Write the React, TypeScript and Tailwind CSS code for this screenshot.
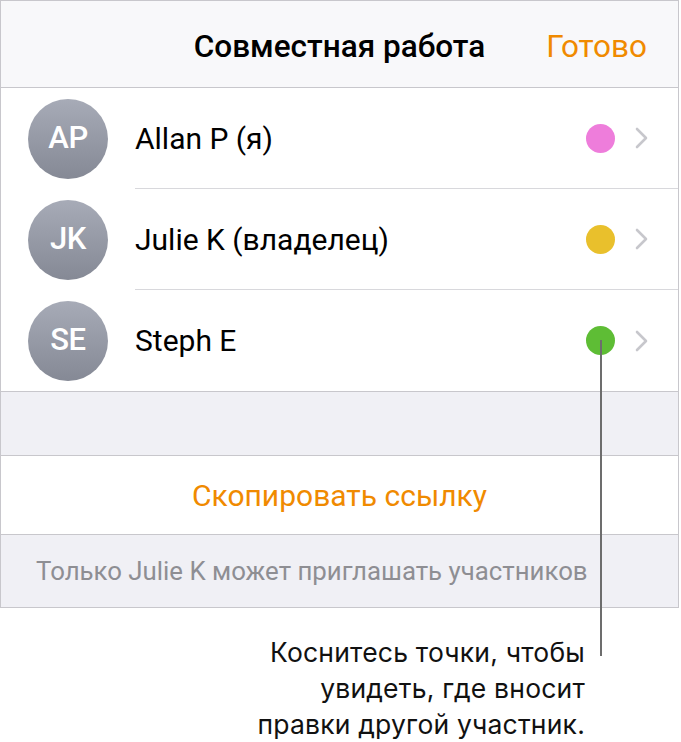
import React from 'react';

const people = [
  { initials: 'AP', name: 'Allan P (я)', color: 'bg-[#ee7ddb]' },
  { initials: 'JK', name: 'Julie K (владелец)', color: 'bg-[#e9c02c]' },
  { initials: 'SE', name: 'Steph E', color: 'bg-[#5ebd35]' },
];

function Chevron() {
  return (
    <svg width="13" height="22" viewBox="0 0 13 22" fill="none">
      <path d="M2 2l9 9-9 9" stroke="#c7c7cc" strokeWidth="2.6" strokeLinecap="round" strokeLinejoin="round" />
    </svg>
  );
}

export default function App() {
  return (
    <div className="w-[681px] h-[742px] bg-white font-['Roboto','Liberation_Sans',sans-serif] relative overflow-hidden">
      <div className="w-[679px] border border-[#c8c7cc] bg-white">
        {/* header */}
        <div className="h-[87px] bg-[#f8f8fa] border-b border-[#c8c7cc] grid grid-cols-[1fr_auto_1fr] items-center pt-[6px]">
          <div />
          <div className="text-[31.5px] font-medium text-black tracking-[0px]">Совместная работа</div>
          <div className="text-right pr-[31px] text-[31.5px] text-[#f08a00]">Готово</div>
        </div>

        {/* participants */}
        <div className="border-b border-[#c8c7cc]">
          {people.map((p, i) => (
            <div key={p.initials} className="flex items-center h-[101px] pl-[27px]">
              <div className="w-[80px] h-[80px] shrink-0 rounded-full bg-gradient-to-b from-[#a7abb7] to-[#858995] flex items-center justify-center text-white text-[31px] font-medium tracking-[-0.5px]">
                {p.initials}
              </div>
              <div className={`ml-[27px] flex-1 h-full flex items-center pr-[30px] ${i < people.length - 1 ? 'border-b border-[#d8d8dc]' : ''}`}>
                <div className="flex-1 text-[30px] text-black">{p.name}</div>
                <div className={`w-[29px] h-[29px] rounded-full ${p.color}`} />
                <div className="ml-[20px] flex items-center"><Chevron /></div>
              </div>
            </div>
          ))}
        </div>

        <div className="h-[64px] bg-[#f0f0f5] border-b border-[#c8c7cc]" />

        <div className="h-[79px] flex items-center justify-center border-b border-[#c8c7cc] text-[30px] text-[#f08a00]">
          Скопировать ссылку
        </div>

        <div className="h-[72px] bg-[#f0f0f5] flex items-center pl-[35px] text-[25.8px] text-[#8e8e93]">
          Только Julie K может приглашать участников
        </div>
      </div>

      {/* callout */}
      <div className="absolute left-[600px] top-[340px] w-[2px] h-[316px] bg-[#6d6d6d]" />
      <div className="w-[585px] text-right pt-[26px] text-[26.5px] leading-[36px] text-[#111] font-['Inter','Roboto',sans-serif] tracking-[0.2px]">
        Коснитесь точки, чтобы<br />увидеть, где вносит<br />правки другой участник.
      </div>
    </div>
  );
}
